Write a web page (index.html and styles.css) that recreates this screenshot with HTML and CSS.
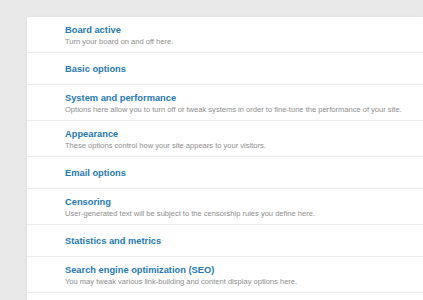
FILE: index.html
```html
<!DOCTYPE html>
<html>
<head>
<meta charset="utf-8">
<link rel="stylesheet" href="styles.css">
</head>
<body>
<div class="panel">
  <div class="row"><a class="title">Board active</a><div class="desc">Turn your board on and off here.</div></div>
  <div class="row single"><a class="title">Basic options</a></div>
  <div class="row"><a class="title">System and performance</a><div class="desc">Options here allow you to turn off or tweak systems in order to fine-tune the performance of your site.</div></div>
  <div class="row"><a class="title">Appearance</a><div class="desc">These options control how your site appears to your visitors.</div></div>
  <div class="row single"><a class="title">Email options</a></div>
  <div class="row"><a class="title">Censoring</a><div class="desc">User-generated text will be subject to the censorship rules you define here.</div></div>
  <div class="row single"><a class="title">Statistics and metrics</a></div>
  <div class="row"><a class="title">Search engine optimization (SEO)</a><div class="desc">You may tweak various link-building and content display options here.</div></div>
</div>
</body>
</html>
```
FILE: styles.css
```css
html, body {
  margin: 0;
  padding: 0;
  background: #e9e9e9;
  font-family: "Liberation Sans", Arial, sans-serif;
  overflow: hidden;
  height: 300px;
}
.panel {
  margin: 17px 0 0 27px;
  min-height: 300px;
  background: #fff;
  box-shadow: 0 0 3px rgba(0,0,0,0.06);
}
.row {
  height: 36px;
  box-sizing: border-box;
  padding: 7px 0 0 38px;
  border-bottom: 1px solid #ececec;
}
.row.single {
  height: 32px;
  padding-top: 10px;
}
.title {
  display: block;
  font-size: 9.3px;
  line-height: 12px;
  font-weight: bold;
  color: #2577b1;
}
.desc {
  font-size: 7.55px;
  line-height: 12px;
  color: #8c8c8c;
}
```
